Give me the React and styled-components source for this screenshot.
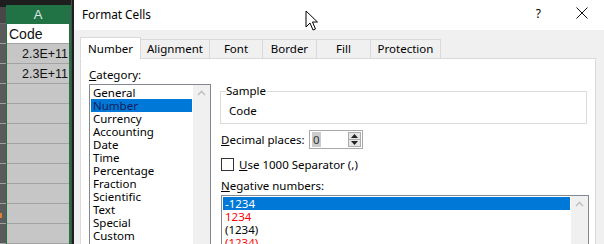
import React from 'react';
import styled, { createGlobalStyle } from 'styled-components';

const GlobalStyle = createGlobalStyle`
  html, body { margin: 0; padding: 0; background: #fff; }
  body { font-family: "Noto Sans", "Open Sans", sans-serif; }
`;

const categories = ['General', 'Number', 'Currency', 'Accounting', 'Date', 'Time', 'Percentage', 'Fraction', 'Scientific', 'Text', 'Special', 'Custom'];
const negatives = [
  { text: '-1234', red: false },
  { text: '1234', red: true },
  { text: '(1234)', red: false },
  { text: '(1234)', red: true },
];
const tabs = [
  { label: 'Number', w: 61 },
  { label: 'Alignment', w: 70 },
  { label: 'Font', w: 54 },
  { label: 'Border', w: 55 },
  { label: 'Fill', w: 55 },
  { label: 'Protection', w: 71 },
];

const ChevronUp = () => (
  <svg width="9" height="6" viewBox="0 0 9 6">
    <polyline points="1,5 4.5,1.5 8,5" fill="none" stroke="#c2c2c2" strokeWidth="1.6" />
  </svg>
);

const SpinArrow = ({ up }) => (
  <svg width="7" height="4" viewBox="0 0 7 4">
    <polygon points={up ? '0,4 3.5,0 7,4' : '0,0 3.5,4 7,0'} fill="#222" />
  </svg>
);

const App = () => {
  return (
    <>
      <GlobalStyle />
      <Screen>
        <Sheet>
          <RowHeads>
            <RowTop />
            <RowCorner />
            {Array.from({ length: 11 }).map((_, i) => (
              <RowHead key={i} $mark={i === 9} />
            ))}
          </RowHeads>
          <Column>
            <ColTop />
            <ColHead>A</ColHead>
            <Cell $active>Code</Cell>
            <Cell $right>2.3E+11</Cell>
            <Cell $right>2.3E+11</Cell>
            {Array.from({ length: 8 }).map((_, i) => (
              <Cell key={i} />
            ))}
          </Column>
          <Edge />
        </Sheet>

        <Dialog>
          <TitleBar>
            <Title>Format Cells</Title>
            <Cursor width="14" height="21" viewBox="0 0 14 21">
              <path d="M1 1 L1 17 L5 13 L8 20 L10.5 19 L7.5 12 L12.5 12 Z" fill="#fff" stroke="#000" strokeWidth="1" strokeLinejoin="miter" />
            </Cursor>
            <TitleButtons>
              <Help>?</Help>
              <svg width="12" height="12" viewBox="0 0 12 12">
                <path d="M0.5 0.5 L11.5 11.5 M11.5 0.5 L0.5 11.5" stroke="#111" strokeWidth="1" />
              </svg>
            </TitleButtons>
          </TitleBar>

          <Body>
            <Tabs>
              {tabs.map((t, i) => (
                <Tab key={t.label} $active={i === 0} $w={t.w}>{t.label}</Tab>
              ))}
            </Tabs>
            <Panel>
              <LeftCol>
                <Label><u>C</u>ategory:</Label>
                <ListBox $h={170}>
                  <Items>
                    {categories.map((c) => (
                      <Item key={c} $selected={c === 'Number'} $dark>{c}</Item>
                    ))}
                  </Items>
                  <ScrollBar><ChevronUp /></ScrollBar>
                </ListBox>
              </LeftCol>

              <RightCol>
                <Group>
                  <Legend>Sample</Legend>
                  <SampleText>Code</SampleText>
                </Group>

                <DecimalRow>
                  <DecimalLabel><u>D</u>ecimal places:</DecimalLabel>
                  <Spinner>
                    <SpinValue><Selected>0</Selected></SpinValue>
                    <SpinButtons>
                      <SpinButton><SpinArrow up /></SpinButton>
                      <SpinButton><SpinArrow /></SpinButton>
                    </SpinButtons>
                  </Spinner>
                </DecimalRow>

                <CheckRow>
                  <CheckBox />
                  <span><u>U</u>se 1000 Separator (,)</span>
                </CheckRow>

                <Label $tight><u>N</u>egative numbers:</Label>
                <ListBox $h={80} $inset>
                  <Items>
                    {negatives.map((n, i) => (
                      <Item key={i} $selected={i === 0} $red={n.red}>{n.text}</Item>
                    ))}
                  </Items>
                  <ScrollBar><ChevronUp /></ScrollBar>
                </ListBox>
              </RightCol>
            </Panel>
          </Body>
        </Dialog>
      </Screen>
    </>
  );
};

const Screen = styled.div`
  display: flex;
  width: 604px;
  height: 244px;
  overflow: hidden;
  font-size: 11.5px;
  color: #000;
`;

const Sheet = styled.div`
  display: flex;
  width: 74px;
  flex-shrink: 0;
  background: #1e1e1e;
`;

const RowHeads = styled.div`
  display: flex;
  flex-direction: column;
  width: 6px;
  background: #5b5b5b;
`;

const RowTop = styled.div`
  height: 8px;
  background: #1e1e1e;
`;

const RowCorner = styled.div`
  height: 19px;
  background: #474747;
  border-bottom: 1px solid #6a6a6a;
`;

const RowHead = styled.div`
  height: 20px;
  flex-shrink: 0;
  box-sizing: border-box;
  border-bottom: 1px solid #a0a0a0;
  background: ${(p) => (p.$mark ? 'linear-gradient(#5b5b5b 0 9px, #e07b39 9px 14px, #5b5b5b 14px)' : '#5b5b5b')};
  background-size: 2px 100%;
  background-repeat: no-repeat;
  background-color: #5b5b5b;
`;

const Column = styled.div`
  display: flex;
  flex-direction: column;
  width: 65px;
  box-sizing: border-box;
  border-left: 1px solid #217346;
  border-right: 2px solid #217346;
  background: #c6c6c6;
`;

const ColTop = styled.div`
  height: 8px;
  margin: 0 -2px 0 -1px;
  background: #1e1e1e;
`;

const ColHead = styled.div`
  height: 19px;
  background: #217346;
  color: #dfe9e2;
  font-family: "Liberation Sans", Arial, sans-serif;
  font-size: 13px;
  line-height: 19px;
  text-align: center;
`;

const Cell = styled.div`
  height: 20px;
  flex-shrink: 0;
  box-sizing: border-box;
  border-bottom: 1px solid #a3a3a3;
  background: ${(p) => (p.$active ? '#fff' : '#c6c6c6')};
  font-family: "Liberation Sans", Arial, sans-serif;
  font-size: ${(p) => (p.$active ? '14px' : '12.5px')};
  line-height: 20px;
  padding: 0 1px 0 2px;
  text-align: ${(p) => (p.$right ? 'right' : 'left')};
  color: #111;
`;

const Edge = styled.div`
  width: 1px;
  background: #4a4a4a;
`;

const Dialog = styled.div`
  flex: 1;
  display: flex;
  flex-direction: column;
  background: #f0f0f0;
`;

const TitleBar = styled.div`
  position: relative;
  display: flex;
  align-items: center;
  justify-content: space-between;
  height: 30px;
  flex-shrink: 0;
  background: #fff;
  padding: 0 16px 0 8px;
`;

const Title = styled.div`
  font-size: 11.8px;
  margin-top: -3px;
`;

const Cursor = styled.svg`
  position: absolute;
  left: 231px;
  top: 10px;
`;

const TitleButtons = styled.div`
  display: flex;
  align-items: center;
  gap: 35px;
  margin-top: -4px;
`;

const Help = styled.span`
  font-size: 12px;
`;

const Body = styled.div`
  flex: 1;
  padding: 7px 8px 0 6px;
  display: flex;
  flex-direction: column;
`;

const Tabs = styled.div`
  display: flex;
  align-items: flex-end;
  height: 22px;
  position: relative;
  z-index: 1;
`;

const Tab = styled.div`
  width: ${(p) => p.$w}px;
  height: ${(p) => (p.$active ? '22px' : '20px')};
  box-sizing: border-box;
  margin-left: -1px;
  border: 1px solid #d9d9d9;
  border-bottom: ${(p) => (p.$active ? '1px solid #fff' : '1px solid #d9d9d9')};
  background: ${(p) => (p.$active ? '#fff' : '#f0f0f0')};
  text-align: center;
  line-height: ${(p) => (p.$active ? '21px' : '18px')};
  &:first-child { margin-left: 0; }
`;

const Panel = styled.div`
  display: flex;
  gap: 9px;
  margin-top: -1px;
  height: 260px;
  flex-shrink: 0;
  background: #fff;
  border: 1px solid #d9d9d9;
  padding: 9px 6px 0 8px;
`;

const LeftCol = styled.div`
  display: flex;
  flex-direction: column;
  width: 122px;
`;

const RightCol = styled.div`
  display: flex;
  flex-direction: column;
  width: 369px;
  padding-top: 16px;
`;

const Label = styled.div`
  line-height: 14px;
  height: 14px;
  margin-bottom: 2px;
  padding-left: ${(p) => (p.$tight ? '1px' : '0')};
  margin-top: ${(p) => (p.$tight ? '8px' : '0')};
`;

const ListBox = styled.div`
  display: flex;
  height: ${(p) => p.$h}px;
  margin-left: ${(p) => (p.$inset ? '1px' : '0')};
  border: 1px solid #828790;
  background: #fff;
`;

const Items = styled.div`
  flex: 1;
  padding: 1px 0 0 1px;
  display: flex;
  flex-direction: column;
`;

const Item = styled.div`
  height: 13px;
  line-height: 13px;
  padding-left: 2px;
  white-space: nowrap;
  background: ${(p) => (p.$selected ? '#0078d7' : 'transparent')};
  color: ${(p) => (p.$selected ? (p.$dark ? '#14205a' : '#fff') : p.$red ? '#ff0000' : '#000')};
`;

const ScrollBar = styled.div`
  width: 17px;
  background: #f0f0f0;
  display: flex;
  justify-content: center;
  padding-top: 5px;
  box-sizing: border-box;
  margin-left: 1px;
`;

const Group = styled.fieldset`
  margin: 0 2px 0 0;
  padding: 0 0 3px 5px;
  border: 1px solid #dcdcdc;
  min-width: 0;
`;

const Legend = styled.legend`
  padding: 0 1px 0 0;
  line-height: 14px;
`;

const SampleText = styled.div`
  line-height: 14px;
  padding: 6px 0 2px 3px;
`;

const DecimalRow = styled.div`
  display: flex;
  align-items: center;
  margin-top: 6px;
  padding-left: 1px;
  height: 19px;
`;

const DecimalLabel = styled.span`
  width: 88px;
`;

const Spinner = styled.div`
  display: flex;
  width: 54px;
  height: 19px;
  box-sizing: border-box;
  border: 1px solid #a8a8a8;
  background: #fff;
  padding: 1px;
`;

const SpinValue = styled.div`
  flex: 1;
  padding-left: 1px;
  line-height: 15px;
`;

const Selected = styled.span`
  background: #cccccc;
  color: #333;
  padding: 0 1px;
`;

const SpinButtons = styled.div`
  display: flex;
  flex-direction: column;
  width: 13px;
  border: 1px solid #adadad;
  box-sizing: border-box;
`;

const SpinButton = styled.div`
  flex: 1;
  display: flex;
  align-items: center;
  justify-content: center;
  background: #e5e5e5;
  & + & { border-top: 1px solid #adadad; }
`;

const CheckRow = styled.div`
  display: flex;
  align-items: center;
  gap: 5px;
  margin-top: 9px;
  padding-left: 1px;
  height: 13px;
`;

const CheckBox = styled.div`
  width: 13px;
  height: 13px;
  box-sizing: border-box;
  border: 1px solid #333;
  background: #fff;
`;

export default App;
